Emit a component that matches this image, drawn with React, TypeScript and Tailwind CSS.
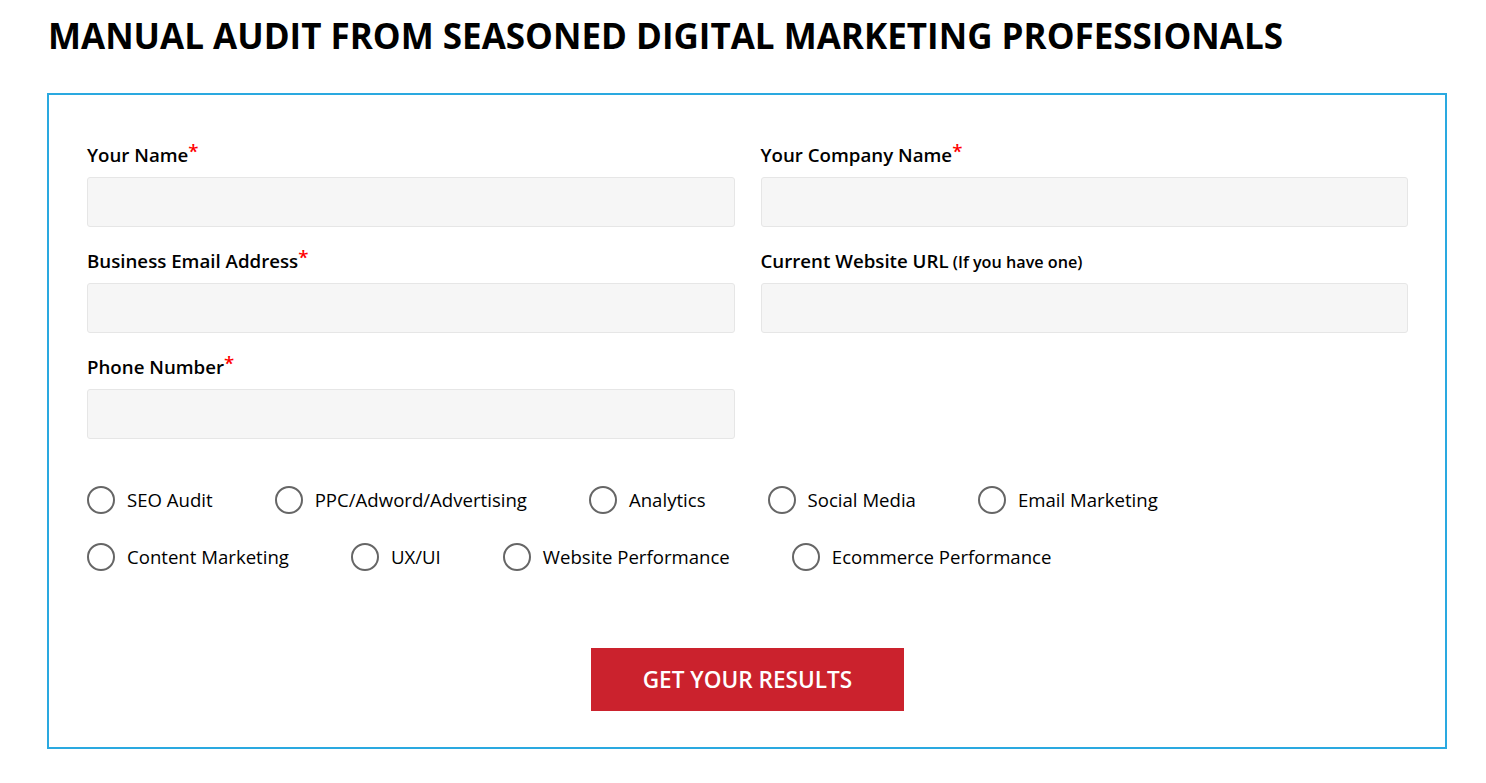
import React from "react";

const font = { fontFamily: '"Open Sans", "Noto Sans", sans-serif' };

function Field({ label, required = true, note }: { label: string; required?: boolean; note?: string }) {
  return (
    <div className="flex flex-col">
      <label className="h-[24px] text-[18.7px] leading-[24px] font-semibold text-black whitespace-nowrap">
        {label}
        {note && <span className="text-[16.2px] leading-none"> {note}</span>}
        {required && <span className="text-[#ff0000] relative top-[-4px] leading-none">*</span>}
      </label>
      <div className="mt-[10px] h-[50px] rounded-[3px] border border-[#e6e6e6] bg-[#f6f6f6]" />
    </div>
  );
}

function Radio({ label }: { label: string }) {
  return (
    <div className="flex items-center mr-[62px]">
      <span className="w-[28px] h-[28px] rounded-full border-[2.5px] border-[#666666] box-border" />
      <span className="ml-[12px] text-[18.6px] leading-[28px] text-black">{label}</span>
    </div>
  );
}

export default function App() {
  return (
    <div style={font} className="bg-white w-[1486px] h-[783px] pl-[47px] pt-[14px]">
      <h1 className="text-[35px] leading-[44px] font-bold text-black uppercase ml-[1px]">
        Manual Audit From Seasoned Digital Marketing Professionals
      </h1>
      <div className="mt-[35px] w-[1400px] h-[656px] border-2 border-[#2aa9e0] pt-[48px] pl-[38px] pr-[37px] pb-[36px] box-border flex flex-col">
        <div className="grid grid-cols-2 gap-x-[26px] gap-y-[22px]">
          <Field label="Your Name" />
          <Field label="Your Company Name" />
          <Field label="Business Email Address" />
          <Field label="Current Website URL" required={false} note="(If you have one)" />
          <Field label="Phone Number" />
        </div>
        <div className="mt-[47px] flex flex-col gap-y-[29px]">
          <div className="flex">
            <Radio label="SEO Audit" />
            <Radio label="PPC/Adword/Advertising" />
            <Radio label="Analytics" />
            <Radio label="Social Media" />
            <Radio label="Email Marketing" />
          </div>
          <div className="flex">
            <Radio label="Content Marketing" />
            <Radio label="UX/UI" />
            <Radio label="Website Performance" />
            <Radio label="Ecommerce Performance" />
          </div>
        </div>
        <div className="mt-auto flex justify-center">
          <button className="w-[313px] h-[63px] bg-[#cb222d] text-white text-[22.6px] font-semibold uppercase">
            Get Your Results
          </button>
        </div>
      </div>
    </div>
  );
}
